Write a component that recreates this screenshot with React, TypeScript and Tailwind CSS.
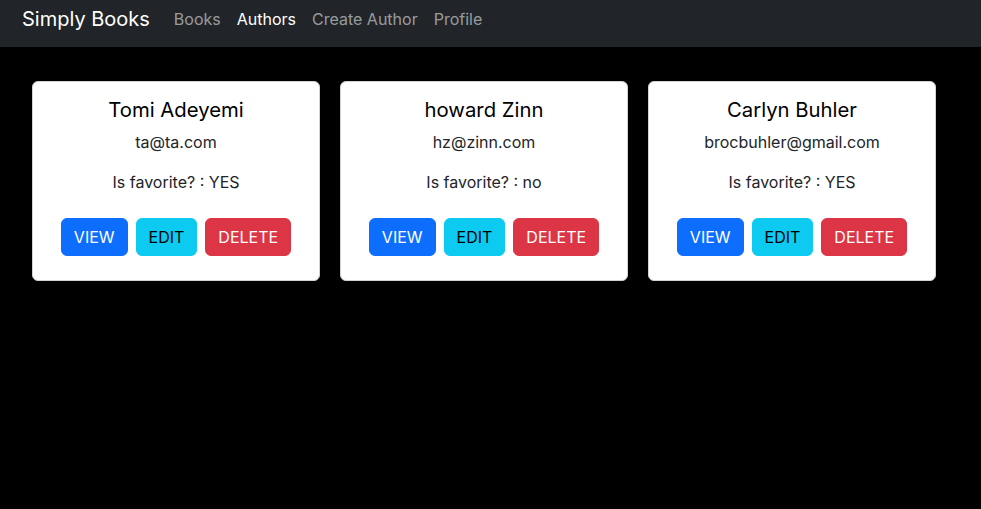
import React from "react";

const authors = [
  { name: "Tomi Adeyemi", email: "ta@ta.com", fav: "YES" },
  { name: "howard Zinn", email: "hz@zinn.com", fav: "no" },
  { name: "Carlyn Buhler", email: "brocbuhler@gmail.com", fav: "YES" },
];

export default function App() {
  return (
    <div
      className="min-h-[509px] w-full bg-black"
      style={{ fontFamily: "Inter, 'Noto Sans', sans-serif" }}
    >
      <nav className="h-[47px] bg-[#212529] pl-[22px] pt-[4px]">
        <div className="flex h-[30px] items-center">
          <span className="mr-[16px] text-[20px] leading-[30px] text-white">Simply Books</span>
          <div className="flex items-center text-[16px] leading-[24px]">
            <span className="px-[8px] text-[rgba(255,255,255,0.55)]">Books</span>
            <span className="px-[8px] text-white">Authors</span>
            <span className="px-[8px] text-[rgba(255,255,255,0.55)]">Create Author</span>
            <span className="px-[8px] text-[rgba(255,255,255,0.55)]">Profile</span>
          </div>
        </div>
      </nav>
      <div className="flex flex-wrap pl-[22px] pt-[24px]">
        {authors.map((a) => (
          <div
            key={a.name}
            className="m-[10px] w-[288px] rounded-[6px] border border-[#d2d2d2] bg-white text-[#212529]"
          >
            <div className="flex flex-col items-center p-[16px] text-center">
              <h5 className="mb-[8px] text-[20.3px] font-normal leading-[24px] text-black">{a.name}</h5>
              <p className="mb-[16px] text-[16px] leading-[24px]">{a.email}</p>
              <p className="mb-[16px] text-[16px] leading-[24px]">Is favorite? : {a.fav}</p>
              <div className="my-[8px] flex gap-[8px]">
                <button className="h-[38px] rounded-[6px] border border-[#0d6efd] bg-[#0d6efd] px-[12px] text-[16px] leading-[24px] text-white">
                  VIEW
                </button>
                <button className="h-[38px] rounded-[6px] border border-[#0dcaf0] bg-[#0dcaf0] px-[12px] text-[16px] leading-[24px] text-black">
                  EDIT
                </button>
                <button className="h-[38px] rounded-[6px] border border-[#dc3545] bg-[#dc3545] px-[12px] text-[16px] leading-[24px] text-white">
                  DELETE
                </button>
              </div>
            </div>
          </div>
        ))}
      </div>
    </div>
  );
}
